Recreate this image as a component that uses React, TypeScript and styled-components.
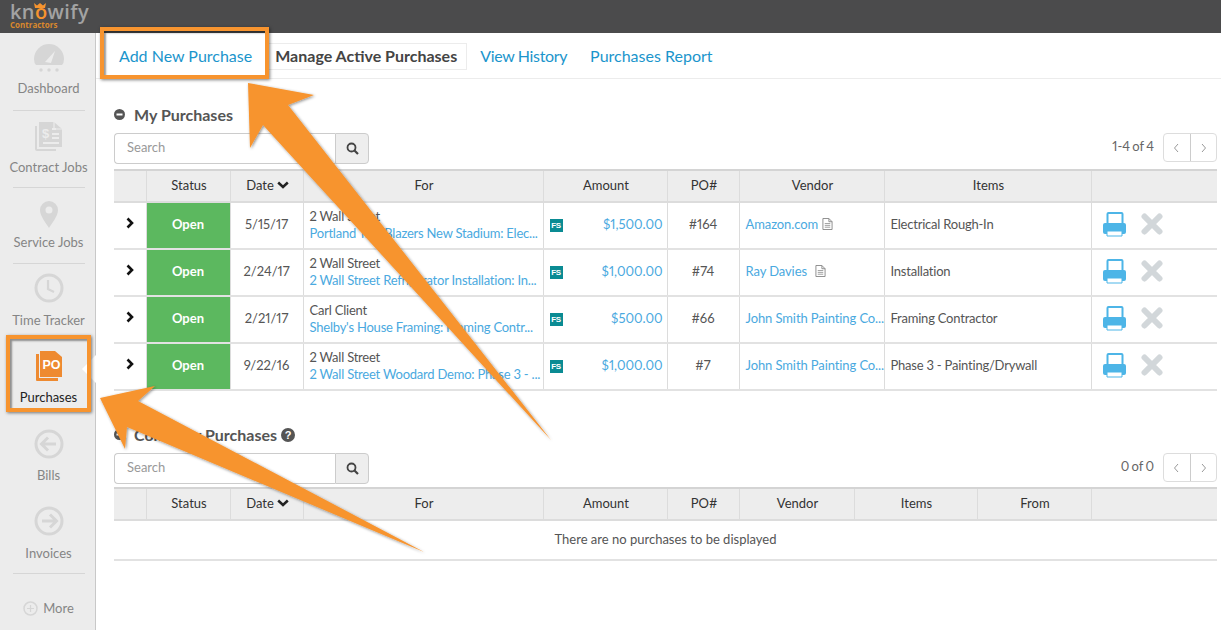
import React from "react";
import styled, { createGlobalStyle } from "styled-components";

const ORANGE = "#f7942f";
const LINK = "#4aa9e0";
const TAB = "#1b95cc";
const FONT = `Lato, "Open Sans", "Liberation Sans", sans-serif`;

const Global = createGlobalStyle`
  html, body { margin: 0; padding: 0; background: #fff; }
  body { font-family: ${FONT}; color: #555; overflow: hidden; font-feature-settings: "pnum" 1; font-variant-numeric: proportional-nums; }
  * { box-sizing: border-box; }
`;

const Page = styled.div`
  position: relative;
  width: 1221px;
  height: 630px;
  overflow: hidden;
  display: flex;
  flex-direction: column;
  background: #fff;
`;
const TopBar = styled.header`
  height: 33px;
  flex: none;
  background: #4b4b4c;
  padding: 3px 0 0 10px;
`;
const Logo = styled.div`
  position: relative;
  width: 82px;
`;
const LogoWord = styled.div`
  font: 600 20px/18px "Open Sans", sans-serif;
  letter-spacing: 0.4px;
  color: #a3a3a3;
  & > span { color: ${ORANGE}; }
`;
const LogoSub = styled.div`
  font: 700 8px/8px "Open Sans", sans-serif;
  color: #d9882c;
`;
const Crown = styled.svg`
  position: absolute;
  left: 24px;
  top: 0;
`;
const Body = styled.div`
  flex: 1;
  display: flex;
  min-height: 0;
`;
const Side = styled.nav`
  width: 96px;
  flex: none;
  padding-left: 2px;
  background: #ececec;
  border-right: 1px solid #c8c8c8;
  display: flex;
  flex-direction: column;
  align-items: center;
  position: relative;
`;
const NavItem = styled.div<{ $h: number; $pb: number; $gap: number; $active?: boolean; $line?: boolean }>`
  height: ${(p) => p.$h}px;
  width: 72px;
  flex: none;
  display: flex;
  flex-direction: column;
  align-items: center;
  justify-content: flex-end;
  padding-bottom: ${(p) => p.$pb}px;
  gap: ${(p) => p.$gap}px;
  font-size: 13px;
  white-space: nowrap;
  color: ${(p) => (p.$active ? "#222" : "#858585")};
  border-bottom: ${(p) => (p.$line ? "1px solid #d6d6d6" : "1px solid transparent")};
`;
const Notch = styled.div`
  position: absolute;
  right: -1px;
  top: 322px;
  width: 0;
  height: 0;
  border-top: 14px solid transparent;
  border-bottom: 14px solid transparent;
  border-right: 14px solid #fff;
`;
const More = styled.div`
  display: flex;
  align-items: center;
  gap: 5px;
  font-size: 13px;
  color: #858585;
  margin-top: 26px;
`;
const Main = styled.main`
  flex: 1;
  min-width: 0;
  padding-right: 4px;
`;
const Tabs = styled.div`
  height: 47px;
  margin-top: -1px;
  margin-right: -4px;
  padding: 11px 0 0 13px;
  border-bottom: 1px solid #ececec;
  display: flex;
  align-items: flex-start;
  gap: 3px;
`;
const Tab = styled.div<{ $active?: boolean; $tight?: boolean }>`
  height: 27px;
  padding: 0 9px;
  border: 1px solid ${(p) => (p.$active ? "#ececec" : "transparent")};
  font-size: 16px;
  line-height: 24px;
  font-weight: ${(p) => (p.$active ? 700 : 400)};
  letter-spacing: ${(p) => (p.$tight ? "-0.35px" : "0")};
  color: ${(p) => (p.$active ? "#444" : TAB)};
  white-space: nowrap;
`;
const Section = styled.section<{ $top: number }>`
  margin: ${(p) => p.$top}px 0 0 18px;
`;
const Title = styled.h2`
  margin: 0;
  height: 19px;
  display: flex;
  align-items: center;
  font-size: 16px;
  font-weight: 700;
  line-height: 19px;
  color: #555;
  gap: 4px;
`;
const TitleIcon = styled.svg`
  margin-right: 5px;
`;
const Toolbar = styled.div<{ $mt: number; $h: number }>`
  display: flex;
  justify-content: space-between;
  align-items: flex-start;
  height: ${(p) => p.$h}px;
  margin-top: ${(p) => p.$mt}px;
`;
const SearchBox = styled.div`
  display: flex;
  height: 31px;
`;
const SearchInput = styled.div`
  width: 221px;
  border: 1px solid #ccc;
  border-right: none;
  border-radius: 4px 0 0 4px;
  padding: 0 12px;
  font-size: 13px;
  line-height: 27px;
  color: #999;
  background: #fff;
`;
const SearchBtn = styled.div`
  width: 34px;
  border: 1px solid #ccc;
  border-radius: 0 4px 4px 0;
  background: #eee;
  display: flex;
  align-items: center;
  justify-content: center;
`;
const Pager = styled.div`
  display: flex;
  align-items: flex-start;
  gap: 9px;
  font-size: 13px;
  line-height: 26px;
  word-spacing: -1px;
  color: #666;
`;
const PagerBtns = styled.div`
  display: flex;
  width: 54px;
  height: 29px;
  border: 1px solid #ddd;
  border-radius: 4px;
`;
const PagerBtn = styled.div`
  flex: 1;
  display: flex;
  align-items: center;
  justify-content: center;
  & + & { border-left: 1px solid #ccc; }
`;
const Table = styled.table`
  width: 1103px;
  border-collapse: collapse;
  table-layout: fixed;
  font-size: 13px;
`;
const Col = styled.col<{ $w: number }>`
  width: ${(p) => p.$w}px;
`;
const Th = styled.th`
  height: 32px;
  padding: 0 0 3px 2px;
  background: #ededed;
  border: 1px solid #dcdcdc;
  border-top: 2px solid #d4d4d4;
  border-bottom: 2px solid #dcdcdc;
  font-weight: 400;
  color: #333;
  white-space: nowrap;
  &:first-child { border-left: none; }
  &:last-child { border-right: none; }
`;
const Td = styled.td<{ $align?: string; $tight?: boolean; $pr?: number }>`
  height: 47px;
  padding: 0 ${(p) => p.$pr ?? 6}px 3px 6px;
  border: 1px solid #dcdcdc;
  border-top: none;
  border-bottom: 2px solid #e2e2e2;
  text-align: ${(p) => p.$align || "left"};
  letter-spacing: ${(p) => (p.$tight ? "-0.22px" : "0")};
  white-space: nowrap;
  overflow: hidden;
  color: #555;
  &:first-child { border-left: none; }
  &:last-child { border-right: none; }
`;
const StatusTd = styled(Td)`
  background: #5cb85f;
  color: #fff;
  font-weight: 700;
  text-align: center;
`;
const Empty = styled.td`
  height: 40px;
  padding-bottom: 3px;
  border-bottom: 2px solid #e2e2e2;
  text-align: center;
  color: #555;
`;
const ForBlock = styled.div`
  padding-top: 2px;
`;
const ForName = styled.div`
  line-height: 17px;
  color: #555;
`;
const Link = styled.a`
  color: ${LINK};
  text-decoration: none;
  line-height: 17px;
`;
const VendorLink = styled(Link)`
  letter-spacing: -0.1px;
`;
const AmountRow = styled.div`
  display: flex;
  align-items: center;
  justify-content: space-between;
`;
const Badge = styled.span`
  width: 13px;
  height: 13px;
  margin-top: 2px;
  background: #0a8b93;
  color: #fff;
  font: 700 8px/13px "Liberation Sans", sans-serif;
  text-align: center;
  letter-spacing: -0.3px;
`;
const VendorRow = styled.div`
  display: flex;
  align-items: center;
`;
const Actions = styled.div`
  display: flex;
  align-items: center;
  gap: 14px;
  padding-left: 5px;
`;
const HL = styled.div<{ $l: number; $t: number; $w: number; $h: number }>`
  position: absolute;
  left: ${(p) => p.$l}px;
  top: ${(p) => p.$t}px;
  width: ${(p) => p.$w}px;
  height: ${(p) => p.$h}px;
  border: 4px solid ${ORANGE};
  box-shadow: 1px 1px 3px rgba(0, 0, 0, 0.5), inset 2px 2px 2px rgba(0, 0, 0, 0.4);
  pointer-events: none;
`;
const Overlay = styled.svg`
  position: absolute;
  left: 0;
  top: 0;
  pointer-events: none;
`;
const DateHead = styled.span`
  display: inline-flex;
  align-items: center;
  gap: 3px;
`;
const Spacer = styled.span<{ $w: number }>`
  width: ${(p) => p.$w}px;
`;

const Chevron = () => (
  <svg width="10" height="12" viewBox="0 0 10 12">
    <path d="M2.5 1.5 L7 6 L2.5 10.5" fill="none" stroke="#111" strokeWidth="2.6" />
  </svg>
);
const ChevDown = () => (
  <svg width="12" height="8" viewBox="0 0 12 8">
    <path d="M1.2 1.5 L6 6 L10.8 1.5" fill="none" stroke="#222" strokeWidth="2.5" />
  </svg>
);
const Mag = () => (
  <svg width="13" height="13" viewBox="0 0 13 13">
    <circle cx="5.5" cy="5.5" r="4" fill="none" stroke="#444" strokeWidth="1.8" />
    <path d="M8.5 8.5 L12 12" stroke="#444" strokeWidth="2.2" />
  </svg>
);
const Caret = ({ d }: { d: string }) => (
  <svg width="7" height="10" viewBox="0 0 7 10">
    <path d={d} fill="none" stroke="#999" strokeWidth="1" />
  </svg>
);
const DocIcon = () => (
  <svg width="11" height="14" viewBox="0 0 12 14">
    <path d="M1 1 H7.5 L11 4.5 V13 H1 Z M7.5 1 V4.5 H11" fill="none" stroke="#888" strokeWidth="1" />
    <path d="M3 6.5 H9 M3 8.5 H9 M3 10.5 H9" stroke="#999" strokeWidth="1" />
  </svg>
);
const PrintIcon = () => (
  <svg width="24" height="25" viewBox="0 0 24 25">
    <path d="M4.5 12 V2 a1 1 0 0 1 1-1 H18.500 a1 1 0 0 1 1 1 V12" fill="none" stroke="#4db5e7" strokeWidth="2" />
    <rect x="0" y="11" width="23" height="11" rx="2" fill="#4db5e7" />
    <path d="M4 19 H19 V24 H4 Z" fill="#fff" stroke="#4db5e7" strokeWidth="1" />
  </svg>
);
const XIcon = () => (
  <svg width="22" height="22" viewBox="0 0 22 22">
    <path d="M3.500 3.500 L18.500 18.500 M18.500 3.500 L3.500 18.500" stroke="#d2d7da" strokeWidth="6" strokeLinecap="round" />
  </svg>
);

const GaugeIcon = () => (
  <svg width="32" height="30" viewBox="0 0 32 30">
    <path d="M1 16 a15 15 0 0 1 30 0 q0 4 -2 6 H3 q-2 -2 -2 -6 Z" fill="#d6d6d6" />
    <path d="M12 19 L22 8 L18 20 Z" fill="#ececec" />
    <circle cx="8" cy="27" r="1.700" fill="#d6d6d6" />
    <circle cx="16" cy="27" r="1.700" fill="#d6d6d6" />
    <circle cx="24" cy="27" r="1.700" fill="#d6d6d6" />
  </svg>
);
const ContractIcon = () => (
  <svg width="28" height="30" viewBox="0 0 28 30">
    <path d="M1 5 V28 a1 1 0 0 0 1 1 H21" fill="none" stroke="#d6d6d6" strokeWidth="2" />
    <path d="M4 1 H19 L27 8 V26 H4 Z" fill="#d6d6d6" />
    <path d="M19 1 V8 H27" fill="none" stroke="#ececec" strokeWidth="1.200" />
    <path d="M17 8 H21 M17 13 H24 M17 17 H24 M8 22 H24" stroke="#ececec" strokeWidth="1.800" />
    <text x="7" y="17" fontFamily="Liberation Sans" fontWeight="700" fontSize="13" fill="#ececec">$</text>
  </svg>
);
const PinIcon = () => (
  <svg width="18" height="27" viewBox="0 0 18 27">
    <path fillRule="evenodd" d="M9 0 a9 9 0 0 1 9 9 c0 6 -6 13 -9 18 c-3 -5 -9 -12 -9 -18 a9 9 0 0 1 9 -9 Z M9 5.500 a3.500 3.500 0 1 0 0 7 a3.500 3.500 0 0 0 0 -7 Z" fill="#d6d6d6" />
  </svg>
);
const ClockIcon = () => (
  <svg width="30" height="30" viewBox="0 0 30 30">
    <circle cx="15" cy="15" r="13" fill="none" stroke="#d6d6d6" strokeWidth="3" />
    <path d="M14 7 V16 L20 19" fill="none" stroke="#d6d6d6" strokeWidth="2.200" />
  </svg>
);
const POIcon = () => (
  <svg width="28" height="32" viewBox="0 0 28 32">
    <path d="M1 4 H4 V28 H23 V31 H2 a1 1 0 0 1 -1 -1 Z" fill="#ee8a30" />
    <path d="M5 1 H20 L27 7 V27 H5 Z" fill="#ee8a30" />
    <text x="7.500" y="19" fontFamily="Liberation Sans" fontWeight="700" fontSize="12.500" fill="#fff">PO</text>
  </svg>
);
const ArrowCircle = ({ dir }: { dir: "l" | "r" }) => (
  <svg width="30" height="30" viewBox="0 0 30 30">
    <circle cx="15" cy="15" r="13" fill="none" stroke="#d6d6d6" strokeWidth="3" />
    <path
      d={dir === "l" ? "M22 15 H8 M14 8.500 L7.500 15 L14 21.500" : "M8 15 H22 M16 8.500 L22.500 15 L16 21.500"}
      fill="none"
      stroke="#d6d6d6"
      strokeWidth="3"
    />
  </svg>
);
const PlusCircle = () => (
  <svg width="15" height="15" viewBox="0 0 15 15">
    <circle cx="7.500" cy="7.500" r="6.500" fill="none" stroke="#d6d6d6" strokeWidth="1.500" />
    <path d="M7.500 4 V11 M4 7.500 H11" stroke="#d6d6d6" strokeWidth="1.200" />
  </svg>
);

const rows = [
  { date: "5/15/17", name: "2 Wall Street", job: "Portland Trail Blazers New Stadium: Elec...", amount: "$1,500.00", po: "#164", vendor: "Amazon.com", gap: 4, doc: true, items: "Electrical Rough-In" },
  { date: "2/24/17", name: "2 Wall Street", job: "2 Wall Street Refrigerator Installation: In...", amount: "$1,000.00", po: "#74", vendor: "Ray Davies", gap: 8, doc: true, items: "Installation" },
  { date: "2/21/17", name: "Carl Client", job: "Shelby's House Framing: Framing Contr...", amount: "$500.00", po: "#66", vendor: "John Smith Painting Co...", gap: 0, doc: false, items: "Framing Contractor" },
  { date: "9/22/16", name: "2 Wall Street", job: "2 Wall Street Woodard Demo: Phase 3 - ...", amount: "$1,000.00", po: "#7", vendor: "John Smith Painting Co...", gap: 0, doc: false, items: "Phase 3 - Painting/Drywall" },
];

const TopToolbar = ({ count, mt, h }: { count: string; mt: number; h: number }) => (
  <Toolbar $mt={mt} $h={h}>
    <SearchBox>
      <SearchInput>Search</SearchInput>
      <SearchBtn><Mag /></SearchBtn>
    </SearchBox>
    <Pager>
      {count}
      <PagerBtns>
        <PagerBtn><Caret d="M5 1 L1.500 5 L5 9" /></PagerBtn>
        <PagerBtn><Caret d="M2 1 L5.500 5 L2 9" /></PagerBtn>
      </PagerBtns>
    </Pager>
  </Toolbar>
);

const MinusIcon = () => (
  <TitleIcon width="11" height="11" viewBox="0 0 11 11">
    <circle cx="5.500" cy="5.500" r="5.500" fill="#555" />
    <rect x="2.500" y="4.500" width="6" height="2" fill="#fff" />
  </TitleIcon>
);

export default function App() {
  return (
    <Page>
      <Global />
      <TopBar>
        <Logo>
          <LogoWord>kn<span>o</span>wify</LogoWord>
          <LogoSub>Contractors</LogoSub>
          <Crown width="12" height="5" viewBox="0 0 12 5">
            <path d="M0 0 L3 2.500 L6 0 L9 2.500 L12 0 L11 5 H1 Z" fill={ORANGE} />
          </Crown>
        </Logo>
      </TopBar>
      <Body>
        <Side>
          <NavItem $h={78} $pb={14} $gap={7} $line><GaugeIcon />Dashboard</NavItem>
          <NavItem $h={77} $pb={12} $gap={8} $line><ContractIcon />Contract Jobs</NavItem>
          <NavItem $h={76} $pb={13} $gap={6} $line><PinIcon />Service Jobs</NavItem>
          <NavItem $h={78} $pb={13} $gap={9}><ClockIcon />Time Tracker</NavItem>
          <NavItem $h={77} $pb={13} $gap={7} $active><POIcon />Purchases</NavItem>
          <NavItem $h={78} $pb={13} $gap={8}><ArrowCircle dir="l" />Bills</NavItem>
          <NavItem $h={77} $pb={12} $gap={9} $line><ArrowCircle dir="r" />Invoices</NavItem>
          <More><PlusCircle />More</More>
          <Notch />
        </Side>
        <Main>
          <Tabs>
            <Tab>Add New Purchase</Tab>
            <Tab $active>Manage Active Purchases</Tab>
            <Tab $tight>View History</Tab>
            <Tab>Purchases Report</Tab>
          </Tabs>
          <Section $top={26}>
            <Title><MinusIcon />My Purchases</Title>
            <TopToolbar count="1-4 of 4" mt={9} h={36} />
            <Table>
              <colgroup>
                {[32, 84, 73, 240, 124, 72, 145, 207, 126].map((w, i) => <Col key={i} $w={w} />)}
              </colgroup>
              <thead>
                <tr>
                  <Th />
                  <Th>Status</Th>
                  <Th><DateHead>Date <ChevDown /></DateHead></Th>
                  <Th>For</Th>
                  <Th>Amount</Th>
                  <Th>PO#</Th>
                  <Th>Vendor</Th>
                  <Th>Items</Th>
                  <Th />
                </tr>
              </thead>
              <tbody>
                {rows.map((r) => (
                  <tr key={r.po}>
                    <Td $align="center"><Chevron /></Td>
                    <StatusTd>Open</StatusTd>
                    <Td $align="center">{r.date}</Td>
                    <Td $tight>
                      <ForBlock>
                        <ForName>{r.name}</ForName>
                        <Link>{r.job}</Link>
                      </ForBlock>
                    </Td>
                    <Td $pr={4}>
                      <AmountRow>
                        <Badge>FS</Badge>
                        <Link>{r.amount}</Link>
                      </AmountRow>
                    </Td>
                    <Td $align="center">{r.po}</Td>
                    <Td>
                      <VendorRow>
                        <VendorLink>{r.vendor}</VendorLink>
                        {r.doc && <Spacer $w={r.gap} />}
                        {r.doc && <DocIcon />}
                      </VendorRow>
                    </Td>
                    <Td $tight>{r.items}</Td>
                    <Td>
                      <Actions><PrintIcon /><XIcon /></Actions>
                    </Td>
                  </tr>
                ))}
              </tbody>
            </Table>
          </Section>
          <Section $top={34}>
            <Title>
              <MinusIcon />Company Purchases
              <svg width="14" height="14" viewBox="0 0 14 14">
                <circle cx="7" cy="7" r="7" fill="#555" />
                <text x="7" y="11" textAnchor="middle" fontFamily="Liberation Sans" fontWeight="700" fontSize="11" fill="#fff">?</text>
              </svg>
            </Title>
            <TopToolbar count="0 of 0" mt={9} h={34} />
            <Table>
              <colgroup>
                {[32, 84, 73, 240, 124, 72, 115, 123, 114, 126].map((w, i) => <Col key={i} $w={w} />)}
              </colgroup>
              <thead>
                <tr>
                  <Th />
                  <Th>Status</Th>
                  <Th><DateHead>Date <ChevDown /></DateHead></Th>
                  <Th>For</Th>
                  <Th>Amount</Th>
                  <Th>PO#</Th>
                  <Th>Vendor</Th>
                  <Th>Items</Th>
                  <Th>From</Th>
                  <Th />
                </tr>
              </thead>
              <tbody>
                <tr>
                  <Empty colSpan={10}>There are no purchases to be displayed</Empty>
                </tr>
              </tbody>
            </Table>
          </Section>
        </Main>
      </Body>
      <HL $l={100} $t={27} $w={169} $h={52} />
      <HL $l={6} $t={335} $w={85} $h={77} />
      <Overlay width="1221" height="630" viewBox="0 0 1221 630">
        <defs>
          <filter id="s" x="-10%" y="-10%" width="120%" height="120%">
            <feDropShadow dx="1" dy="1" stdDeviation="1.500" floodColor="#000" floodOpacity="0.45" />
          </filter>
        </defs>
        <polygon points="248,83 314,95 288,105 551,440 263,125 250,148" fill={ORANGE} filter="url(#s)" />
        <polygon points="100,398 155,386 138,401 424,552 127,427 125,449" fill={ORANGE} filter="url(#s)" />
      </Overlay>
    </Page>
  );
}
